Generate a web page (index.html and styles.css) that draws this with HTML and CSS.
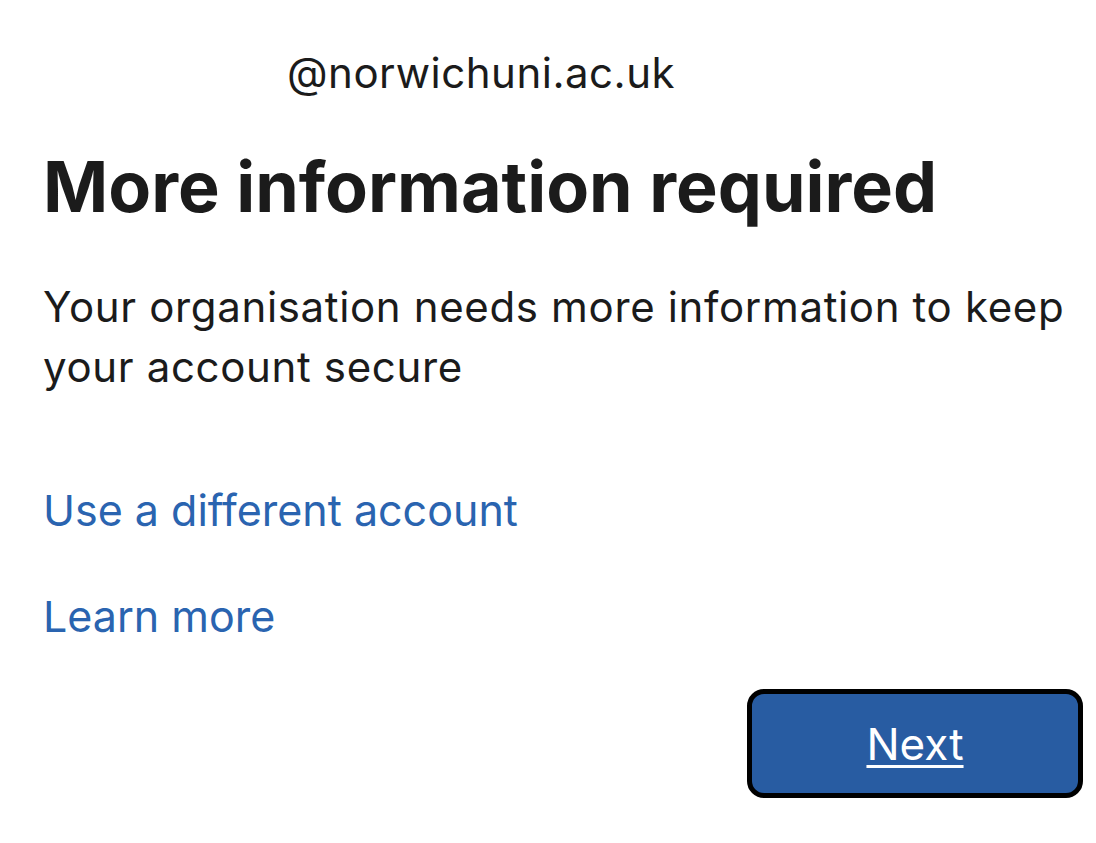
FILE: index.html
```html
<!DOCTYPE html>
<html lang="en">
<head>
<meta charset="utf-8">
<title>More information required</title>
<link rel="stylesheet" href="styles.css">
</head>
<body>
<main class="page">
  <div class="account">@norwichuni.ac.uk</div>
  <h1 class="title">More information required</h1>
  <p class="desc">Your organisation needs more information to keep your account secure</p>
  <a class="link link-first" href="#">Use a different account</a>
  <a class="link link-second" href="#">Learn more</a>
  <div class="actions">
    <button class="btn" type="button"><span class="btn-label">Next</span></button>
  </div>
</main>
</body>
</html>
```
FILE: styles.css
```css
html, body {
  margin: 0;
  padding: 0;
  background: #ffffff;
}
body {
  font-family: Inter, "Liberation Sans", Arial, sans-serif;
  color: #1b1b1b;
}
.page {
  padding: 48px 13px 0 43px;
  display: flex;
  flex-direction: column;
}
.account {
  font-size: 42px;
  line-height: 50px;
  letter-spacing: 0.5px;
  padding-left: 244px;
  color: #1b1b1b;
}
.title {
  margin: 47px 0 0 0;
  font-size: 70px;
  line-height: 84px;
  font-weight: 700;
  color: #1b1b1b;
}
.desc {
  margin: 48px 0 0 0;
  font-size: 42px;
  line-height: 60px;
  letter-spacing: 0.65px;
  font-weight: 400;
}
.link {
  display: block;
  font-size: 43px;
  line-height: 60px;
  color: #2a64b0;
  text-decoration: none;
  align-self: flex-start;
}
.link-first {
  margin-top: 83px;
}
.link-second {
  margin-top: 46px;
}
.actions {
  margin-top: 43px;
  display: flex;
  justify-content: flex-end;
}
.btn {
  width: 336px;
  height: 109px;
  box-sizing: border-box;
  border: 5px solid #000000;
  border-radius: 17px;
  background: #285ca2;
  color: #ffffff;
  font-family: Inter, "Liberation Sans", Arial, sans-serif;
  font-size: 44px;
  padding: 0;
  cursor: pointer;
}
.btn-label {
  text-decoration: underline;
  text-decoration-thickness: 3px;
  text-underline-offset: 5px;
}
```
